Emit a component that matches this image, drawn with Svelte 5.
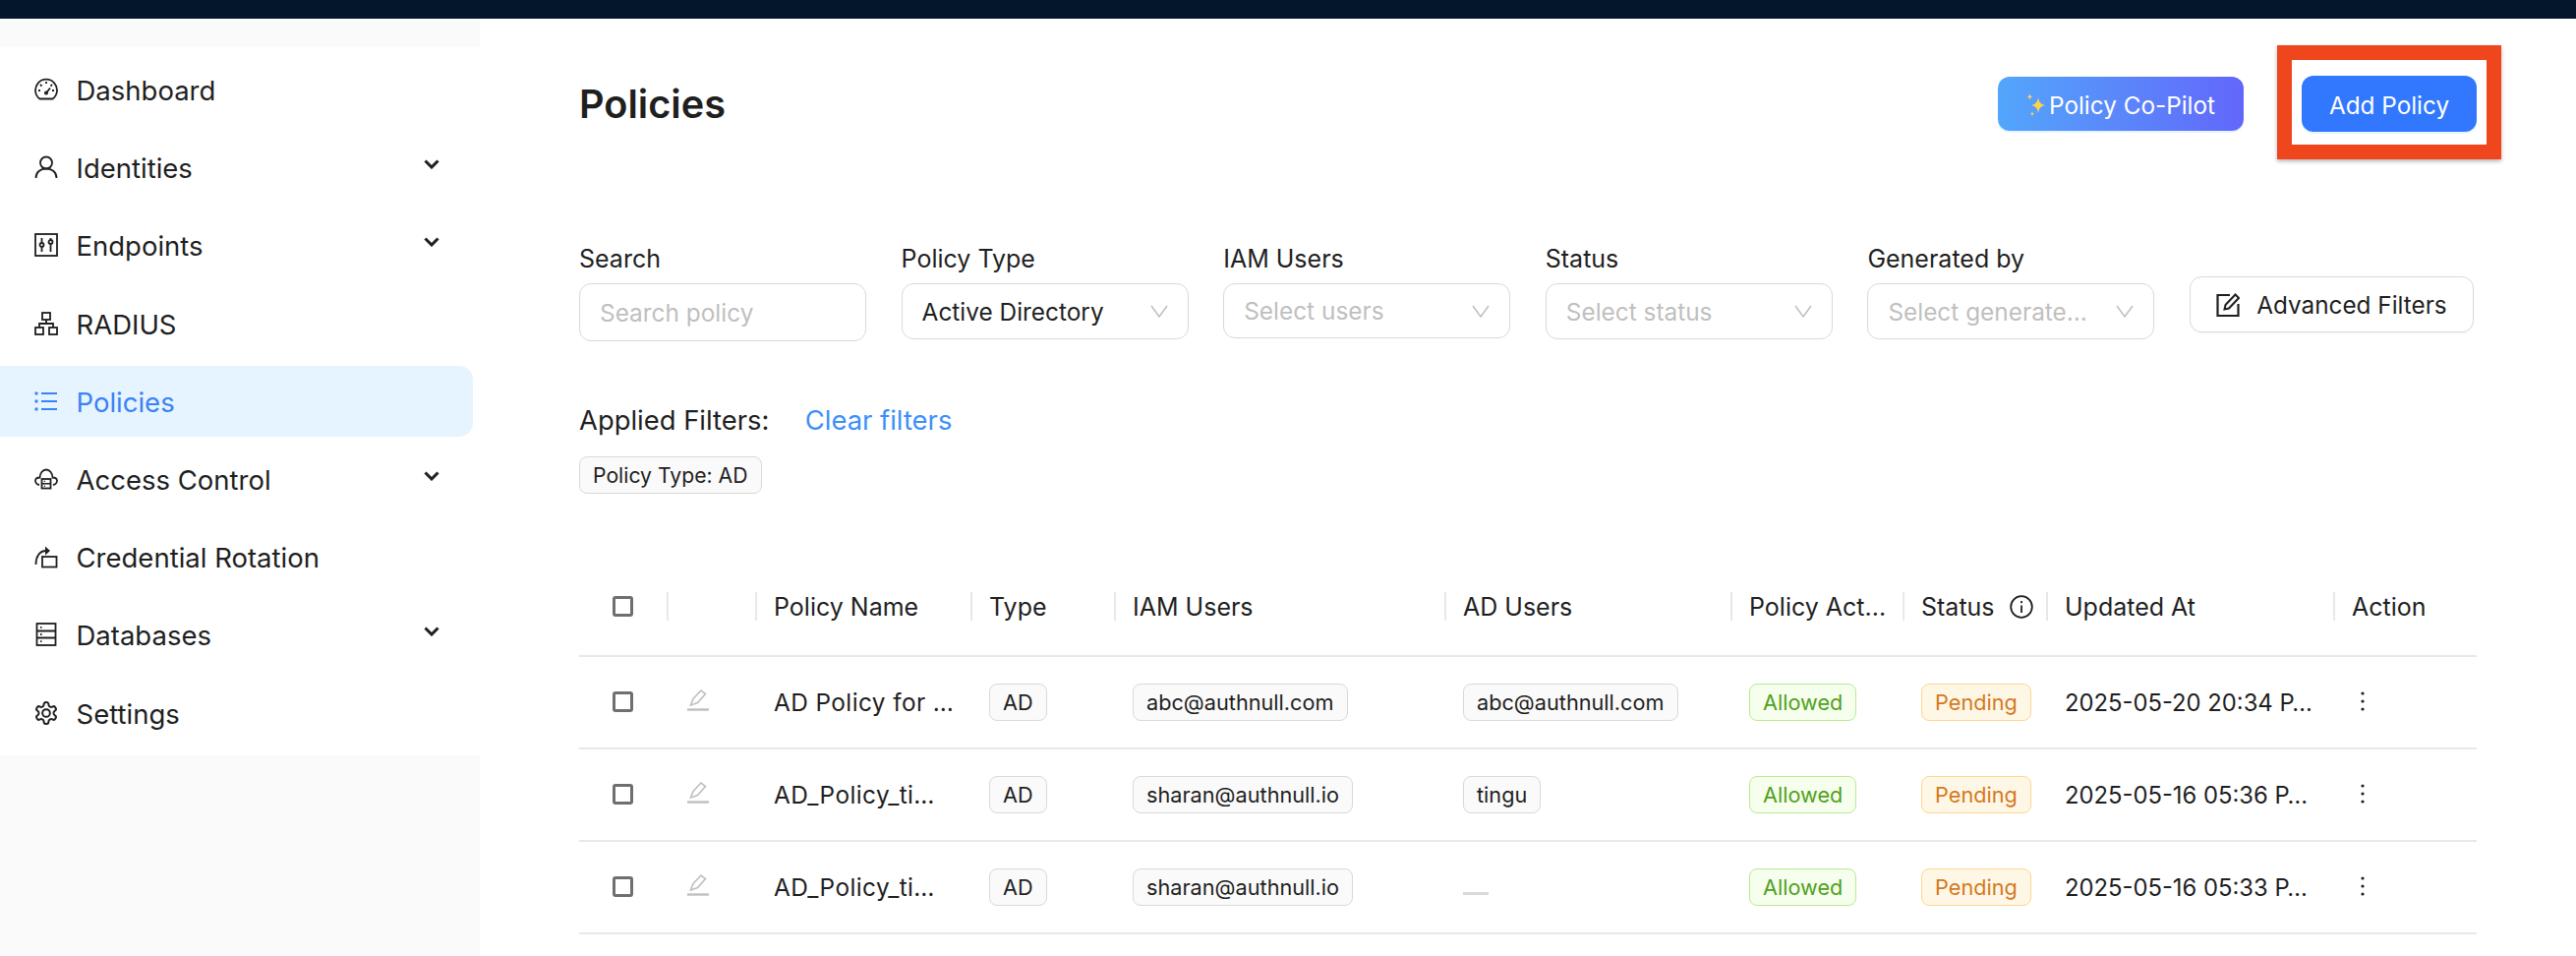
<script>
    const icons = {
        dashboard: `<path d="M5.4 21.5A11 11 0 1 1 18.6 21.5Z"/><path d="M12 15.5l4-5M6 13H4M20 13h-2M12 6V4M7.5 8.5L6 7M16.500 8.500L18 7"/><circle cx="12" cy="15.500" r="1.200"/>`,
        user: `<circle cx="12" cy="7.500" r="6"/><path d="M1.500 23c0-6 4.500-9.500 10.500-9.500S22.500 17 22.500 23"/>`,
        control: `<rect x="1" y="1" width="22" height="22"/><path d="M7.500 5v4.500M7.500 14.500V19M16.500 5v1.500M16.500 11.500V19"/><circle cx="7.500" cy="12" r="2"/><circle cx="16.500" cy="9" r="2"/>`,
        cluster: `<rect x="8" y="1" width="8" height="7"/><rect x="1" y="16" width="8" height="7"/><rect x="15" y="16" width="8" height="7"/><path d="M12 8v4M5 16v-4h14v4"/>`,
        list: `<path d="M7 4h16M7 12h16M7 20h16"/><circle cx="2" cy="4" r="0.800"/><circle cx="2" cy="12" r="0.800"/><circle cx="2" cy="20" r="0.800"/>`,
        cloud: `<path d="M5 18C2.500 17.500 .8 15.500 1 13.500 1.200 11.500 3 10.500 5.500 10.500 5.800 6 8.500 2.500 12 2.500S18.200 6 18.500 10.500C21 10.500 22.800 11.500 23 13.500 23.200 15.500 21.500 17.500 19 18"/><rect x="7.500" y="12" width="9" height="9.500"/><path d="M7.500 16.700h9M9.800 14.400h1.200M9.800 19.100h1.200" stroke-width="1.400"/>`,
        rotate: `<rect x="8" y="12" width="14.500" height="10.500"/><path d="M1.500 20C1.500 12 5 6 12 6"/><path d="M11 1.500l5 4.500-5 4.500z" fill="currentColor" stroke="none"/>`,
        database: `<rect x="2.500" y="1" width="19" height="22"/><path d="M2.500 8.500h19M2.500 15.500h19M6 4.800h1.500M6 12h1.500M6 19.200h1.500"/>`,
        settings: `<g transform="translate(-1.100 -1.100) scale(1.092)"><path d="M12.220 2h-.44a2 2 0 0 0-2 2v.18a2 2 0 0 1-1 1.730l-.43.25a2 2 0 0 1-2 0l-.15-.08a2 2 0 0 0-2.730.73l-.22.38a2 2 0 0 0 .73 2.730l.15.1a2 2 0 0 1 1 1.720v.51a2 2 0 0 1-1 1.740l-.15.09a2 2 0 0 0-.73 2.730l.22.38a2 2 0 0 0 2.730.73l.15-.08a2 2 0 0 1 2 0l.43.25a2 2 0 0 1 1 1.730V20a2 2 0 0 0 2 2h.44a2 2 0 0 0 2-2v-.18a2 2 0 0 1 1-1.730l.43-.25a2 2 0 0 1 2 0l.15.08a2 2 0 0 0 2.730-.73l.22-.39a2 2 0 0 0-.73-2.730l-.15-.08a2 2 0 0 1-1-1.740v-.5a2 2 0 0 1 1-1.740l.15-.09a2 2 0 0 0 .73-2.730l-.22-.38a2 2 0 0 0-2.730-.73l-.15.08a2 2 0 0 1-2 0l-.43-.25a2 2 0 0 1-1-1.730V4a2 2 0 0 0-2-2z"/><circle cx="12" cy="12" r="3.500"/></g>`
    };

    const navItems = [
        { label: 'Dashboard', icon: 'dashboard' },
        { label: 'Identities', icon: 'user', arrow: true },
        { label: 'Endpoints', icon: 'control', arrow: true },
        { label: 'RADIUS', icon: 'cluster' },
        { label: 'Policies', icon: 'list', active: true },
        { label: 'Access Control', icon: 'cloud', arrow: true },
        { label: 'Credential Rotation', icon: 'rotate' },
        { label: 'Databases', icon: 'database', arrow: true },
        { label: 'Settings', icon: 'settings' }
    ];

    const filters = [
        { label: 'Policy Type', value: 'Active Directory' },
        { label: 'IAM Users', placeholder: 'Select users', short: true },
        { label: 'Status', placeholder: 'Select status' },
        { label: 'Generated by', placeholder: 'Select generate...' }
    ];

    const columns = [89, 90, 219, 146, 336, 291, 175, 146, 292, 146];

    const policies = [
        { name: 'AD Policy for …', iam: 'abc@authnull.com', ad: 'abc@authnull.com', updated: '2025-05-20 20:34 P…' },
        { name: 'AD_Policy_ti…', iam: 'sharan@authnull.io', ad: 'tingu', updated: '2025-05-16 05:36 P…' },
        { name: 'AD_Policy_ti…', iam: 'sharan@authnull.io', ad: null, updated: '2025-05-16 05:33 P…' }
    ];
</script>

<div class="topbar"></div>

<div class="layout">
    <aside class="sidebar">
        <nav class="menu">
            {#each navItems as item}
                <div class="nav-item" class:active={item.active}>
                    <svg class="nav-icon" viewBox="0 0 24 24" fill="none" stroke="currentColor" stroke-width="1.800">
                        {@html icons[item.icon]}
                    </svg>
                    <span class="nav-label">{item.label}</span>
                    {#if item.arrow}
                        <svg class="nav-arrow" viewBox="0 0 16 10" fill="none" stroke="currentColor" stroke-width="3">
                            <path d="M1.500 1.500L8 8l6.500-6.500" />
                        </svg>
                    {/if}
                </div>
            {/each}
        </nav>
    </aside>

    <main class="content">
        <header class="page-header">
            <h1>Policies</h1>
            <div class="actions">
                <button class="copilot">
                    <svg class="sparkles" viewBox="0 0 20 26">
                        <path d="M12 5c.6 4.500 2.500 7 7 8-4.500 1-6.400 3.500-7 8-.6-4.500-2.500-7-7-8 4.500-1 6.400-3.500 7-8z" fill="#fcd34d" />
                        <path d="M3.500 1c.2 2 .9 3 2.500 3.500C4.400 5 3.700 6 3.500 8 3.300 6 2.600 5 1 4.500 2.600 4 3.300 3 3.500 1z" fill="#fcd34d" />
                        <path d="M6 19c.2 1.600.7 2.300 2 2.700-1.300.4-1.800 1.100-2 2.800-.2-1.700-.7-2.400-2-2.800 1.300-.4 1.800-1.100 2-2.700z" fill="#fcd34d" />
                    </svg>Policy Co-Pilot
                </button>
                <div class="highlighted">
                    <button class="primary">Add Policy</button>
                    <div class="callout"></div>
                </div>
            </div>
        </header>

        <section class="filters">
            <div class="field">
                <div class="field-label">Search</div>
                <div class="control search"><span class="placeholder">Search policy</span></div>
            </div>
            {#each filters as f}
                <div class="field">
                    <div class="field-label">{f.label}</div>
                    <div class="control" class:short={f.short}>
                        {#if f.value}
                            <span>{f.value}</span>
                        {:else}
                            <span class="placeholder">{f.placeholder}</span>
                        {/if}
                        <svg class="select-arrow" viewBox="0 0 18 13" fill="none" stroke="#bfbfbf" stroke-width="1.500">
                            <path d="M1 1l8 11 8-11" />
                        </svg>
                    </div>
                </div>
            {/each}
            <button class="advanced">
                <svg viewBox="0 0 24 24" width="24" height="24" fill="none" stroke="#1f1f1f" stroke-width="2.200">
                    <path d="M14 2H1.500v21h21V11" />
                    <path d="M8.500 16.500l1-4.500L19.500 1.500l3.500 3.500-10 10.500z" stroke-width="2" />
                </svg>
                Advanced Filters
            </button>
        </section>

        <div class="applied">
            <span>Applied Filters:</span>
            <span class="clear">Clear filters</span>
        </div>
        <div><span class="tag filter-tag">Policy Type: AD</span></div>

        <table>
            <colgroup>
                {#each columns as w}
                    <col style="width: {w}px" />
                {/each}
            </colgroup>
            <thead>
                <tr>
                    <th class="center"><span class="checkbox"></span></th>
                    <th></th>
                    <th>Policy Name</th>
                    <th>Type</th>
                    <th>IAM Users</th>
                    <th>AD Users</th>
                    <th>Policy Act...</th>
                    <th>
                        <div class="status-head">
                            Status
                            <svg viewBox="0 0 24 24" width="24" height="24" fill="none" stroke="#1f1f1f" stroke-width="1.800">
                                <circle cx="12" cy="12" r="10.800" />
                                <path d="M12 10.500V18M12 6v2.200" />
                            </svg>
                        </div>
                    </th>
                    <th>Updated At</th>
                    <th>Action</th>
                </tr>
            </thead>
            <tbody>
                {#each policies as p}
                    <tr>
                        <td class="center"><span class="checkbox"></span></td>
                        <td>
                            <svg class="edit" viewBox="0 0 24 22" fill="none" stroke="#bfbfbf" stroke-width="1.600">
                                <path d="M4.500 16L7 9.500 15 1l4.500 3.500-8 9z" />
                                <path d="M1 20.500h22" stroke-width="2.400" />
                            </svg>
                        </td>
                        <td class="name">{p.name}</td>
                        <td><span class="tag">AD</span></td>
                        <td><span class="tag">{p.iam}</span></td>
                        <td>
                            {#if p.ad}
                                <span class="tag">{p.ad}</span>
                            {:else}
                                <span class="dash"></span>
                            {/if}
                        </td>
                        <td><span class="tag allowed">Allowed</span></td>
                        <td><span class="tag pending">Pending</span></td>
                        <td class="updated">{p.updated}</td>
                        <td>
                            <svg class="kebab" viewBox="0 0 6 20" fill="#1f1f1f">
                                <circle cx="3" cy="2" r="1.600" />
                                <circle cx="3" cy="10" r="1.600" />
                                <circle cx="3" cy="18" r="1.600" />
                            </svg>
                        </td>
                    </tr>
                {/each}
            </tbody>
        </table>
    </main>
</div>

<style>
    :global(body) {
        background: #fff;
        overflow: hidden;
        font-family: Inter, "Liberation Sans", sans-serif;
        color: #1f1f1f;
    }
    .topbar {
        height: 19px;
        background: #03162c;
    }
    .layout {
        display: flex;
        height: 953px;
    }
    .sidebar {
        width: 488px;
        flex: none;
        background: #fafafa;
        padding-top: 29px;
    }
    .menu {
        background: #fff;
        padding: 7px 0;
        display: flex;
        flex-direction: column;
        gap: 7.2px;
    }
    .nav-item {
        width: 481px;
        height: 72px;
        box-sizing: border-box;
        padding: 0 34px 0 35px;
        display: flex;
        align-items: center;
        gap: 18.500px;
        font-size: 27.500px;
        border-radius: 0 14px 14px 0;
    }
    .nav-item.active {
        background: #e6f4ff;
        color: #3b82f6;
    }
    .nav-label {
        margin-top: 2px;
    }
    .nav-icon {
        width: 24px;
        height: 24px;
        flex: none;
    }
    .nav-arrow {
        width: 16px;
        height: 10px;
        margin-left: auto;
        margin-top: -6px;
    }
    .content {
        flex: 1;
        padding: 58px 101px 0;
        min-width: 0;
    }
    .page-header {
        display: flex;
        justify-content: space-between;
        align-items: center;
        height: 57px;
    }
    h1 {
        margin: 0;
        font-size: 39.700px;
        font-weight: 600;
    }
    .actions {
        display: flex;
        align-items: center;
        gap: 59px;
    }
    button {
        font: inherit;
        font-size: 24.300px;
        border: none;
        border-radius: 12px;
        color: #fff;
        display: flex;
        align-items: center;
        justify-content: center;
        padding: 2px 0 0;
    }
    .copilot {
        width: 250px;
        height: 55px;
        background: linear-gradient(90deg, #53a6fb, #6267fb);
        box-shadow: 0 2px 0 rgba(5, 145, 255, 0.1);
    }
    .sparkles {
        width: 20px;
        height: 26px;
        margin-right: 3px;
    }
    .primary {
        width: 178px;
        height: 57px;
        background: #3178ff;
        box-shadow: 0 2px 0 rgba(5, 145, 255, 0.1);
    }
    .highlighted {
        position: relative;
    }
    .callout {
        position: absolute;
        left: -25px;
        right: -25px;
        top: -31px;
        bottom: -28px;
        border: 15px solid #f0461e;
        box-shadow: 0 2px 4px rgba(0, 0, 0, 0.3);
    }
    .filters {
        display: flex;
        gap: 35.600px;
        margin-top: 114px;
        align-items: flex-start;
    }
    .field {
        width: 292px;
    }
    .field-label {
        font-size: 25px;
        line-height: 30px;
        margin-bottom: 10px;
    }
    .control {
        height: 57px;
        box-sizing: border-box;
        border: 1.5px solid #d9d9d9;
        border-radius: 12px;
        padding: 0 20px;
        font-size: 24.400px;
        display: flex;
        align-items: center;
        justify-content: space-between;
    }
    .control.search {
        height: 59px;
    }
    .control.short {
        height: 56px;
    }
    .placeholder {
        color: #bfbfbf;
    }
    .select-arrow {
        width: 18px;
        height: 13px;
    }
    .advanced {
        width: 289px;
        height: 57px;
        margin-top: 33px;
        padding: 0;
        background: #fff;
        border: 1.5px solid #d9d9d9;
        color: #1f1f1f;
        gap: 17px;
        box-shadow: 0 2px 0 rgba(0, 0, 0, 0.02);
    }
    .applied {
        display: flex;
        gap: 36.500px;
        margin-top: 62px;
        font-size: 27.400px;
        line-height: 36px;
    }
    .clear {
        color: #3b8ffb;
    }
    .tag {
        display: inline-flex;
        align-items: center;
        height: 38px;
        box-sizing: border-box;
        padding: 0 13px;
        border: 1.5px solid #d9d9d9;
        border-radius: 8px;
        background: #fafafa;
        font-size: 21.700px;
        white-space: nowrap;
        vertical-align: middle;
    }
    .filter-tag {
        margin-top: 19px;
        font-size: 21.200px;
    }
    .allowed {
        color: #52a01e;
        background: #f6ffed;
        border-color: #b7eb8f;
    }
    .pending {
        color: #d4791f;
        background: #fff7e6;
        border-color: #ffd591;
    }
    table {
        width: 1930px;
        margin-top: 66px;
        border-collapse: collapse;
        table-layout: fixed;
    }
    th {
        height: 99px;
        padding: 0 0 0 19px;
        box-sizing: border-box;
        text-align: left;
        font-size: 25px;
        font-weight: 400;
        position: relative;
        border-bottom: 2px solid #e8e8e8;
        white-space: nowrap;
    }
    th:not(:first-child)::before {
        content: '';
        position: absolute;
        left: 0;
        top: 34px;
        height: 29px;
        width: 1.5px;
        background: #e8e8e8;
    }
    td {
        height: 94px;
        padding: 0 0 0 19px;
        box-sizing: border-box;
        font-size: 24.400px;
        border-bottom: 2px solid #e8e8e8;
    }
    th.center,
    td.center {
        padding: 0 1px 0 0;
    }
    td.name,
    td.updated {
        white-space: nowrap;
    }
    td.name {
        letter-spacing: 0.4px;
    }
    td.updated {
        font-size: 23.800px;
    }
    .checkbox {
        display: block;
        width: 21px;
        height: 21px;
        box-sizing: border-box;
        border: 3px solid #6f6f6f;
        border-radius: 3px;
        margin: -1px auto 0;
    }
    .status-head {
        display: flex;
        align-items: center;
        justify-content: space-between;
        padding-right: 13px;
    }
    .edit {
        display: block;
        width: 24px;
        height: 22px;
        margin: -4px 0 0 1px;
    }
    .dash {
        display: block;
        width: 26px;
        height: 3px;
        background: #d9d9d9;
        margin-top: 13px;
    }
    .kebab {
        display: block;
        width: 6px;
        height: 20px;
        margin: -3px 0 0 8px;
    }
</style>
